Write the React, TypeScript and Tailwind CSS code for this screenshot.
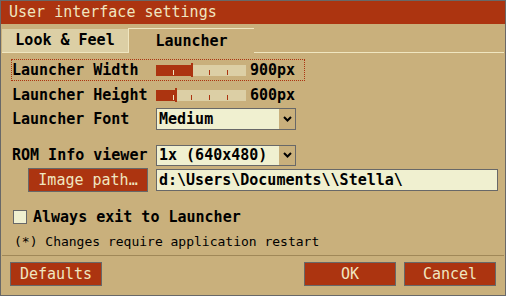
import React from 'react';

const TICKS = [17, 35, 53, 71];

function Slider({ fill }: { fill: number }) {
  return (
    <svg width="90" height="16" className="block shrink-0">
      <rect x="0" y="3" width="90" height="11" fill="#dccfa5" />
      <rect x="0" y="3" width={fill} height="11" fill="#ac3410" />
      {TICKS.map((t) => (
        <rect key={t} x={t} y="8" width="1" height="5" fill={t < fill ? '#f0e6c0' : '#ac3410'} />
      ))}
      <rect x={fill} y="1" width="2" height="14" fill="#ac3410" />
    </svg>
  );
}

function Dropdown({ value, h }: { value: string; h: string }) {
  return (
    <div className={`flex w-[140px] ${h} border border-[#686868] bg-[#f0f0d0]`}>
      <div className="flex flex-1 items-center pl-[2px]">{value}</div>
      <div className="flex w-[16px] items-center justify-center bg-[#c9b07c]">
        <svg width="9" height="6">
          <polyline points="1,1 4.5,4.5 8,1" fill="none" stroke="#000" strokeWidth="2" />
        </svg>
      </div>
    </div>
  );
}

function Button({ label, w }: { label: string; w: string }) {
  return (
    <div className={`flex ${w} h-[24px] items-center justify-center border border-[#686868] bg-[#ac3410] text-[#f0e6c0] font-normal`}>
      {label}
    </div>
  );
}

export default function App() {
  return (
    <div className="flex h-[296px] w-[506px] flex-col border border-[#686868] bg-[#c9b07c] font-['DejaVu_Sans_Mono',monospace] text-[15px] font-bold leading-none text-black">
      <div className="flex h-[23px] items-center bg-[#ac3410] pl-[8px] font-normal text-[#f0e6c0]">
        User interface settings
      </div>

      {/* tabs */}
      <div className="mt-[4px] flex h-[25px] items-end px-[1px]">
        <div className="flex h-[24px] w-[126px] items-center justify-center border-b border-[#f0e6c0] bg-[#dccfa5]">
          Look &amp; Feel
        </div>
        <div className="flex h-[25px] w-[126px] items-center justify-center border-t border-l border-[#f0e6c0] border-r-[#9a8458]">
          Launcher
        </div>
        <div className="h-full flex-1 border-b border-[#f0e6c0]" />
      </div>

      {/* launcher width */}
      <div className="mt-[6px] ml-[10px] flex h-[22px] w-[294px] items-center border border-dotted border-[#ac3410]">
        <div className="w-[144px]">Launcher Width</div>
        <Slider fill={35} />
        <div className="ml-[4px]">900px</div>
      </div>

      <div className="mt-[3px] ml-[11px] flex h-[22px] items-center">
        <div className="w-[144px]">Launcher Height</div>
        <Slider fill={19} />
        <div className="ml-[4px]">600px</div>
      </div>

      <div className="mt-[2px] ml-[11px] flex h-[22px] items-center">
        <div className="w-[144px]">Launcher Font</div>
        <Dropdown value="Medium" h="h-[22px]" />
      </div>

      <div className="mt-[14px] ml-[11px] flex h-[22px] items-center">
        <div className="w-[144px]">ROM Info viewer</div>
        <Dropdown value="1x (640x480)" h="h-[21px]" />
      </div>

      <div className="mt-[2px] flex h-[24px] items-center pl-[27px]">
        <Button label="Image path…" w="w-[120px]" />
        <div className="ml-[8px] flex h-[22px] w-[342px] items-center border border-[#686868] bg-[#f0f0d0] pl-[2px]">
          d:\Users\Documents\\Stella\
        </div>
      </div>

      <div className="mt-[18px] flex h-[14px] items-center pl-[12px]">
        <div className="h-[14px] w-[14px] border border-[#686868] bg-[#f0f0d0]" />
        <div className="ml-[6px]">Always exit to Launcher</div>
      </div>

      <div className="mt-[9px] flex h-[16px] items-center pl-[13px] text-[13px] font-normal">
        (*) Changes require application restart
      </div>

      <div className="flex-1" />
      <div className="mx-[1px] h-px bg-[#a08858]" />

      <div className="mt-[6px] mb-[9px] flex h-[24px] justify-between px-[9px]">
        <Button label="Defaults" w="w-[92px]" />
        <div className="flex gap-[8px]">
          <Button label="OK" w="w-[92px]" />
          <Button label="Cancel" w="w-[92px]" />
        </div>
      </div>
    </div>
  );
}
